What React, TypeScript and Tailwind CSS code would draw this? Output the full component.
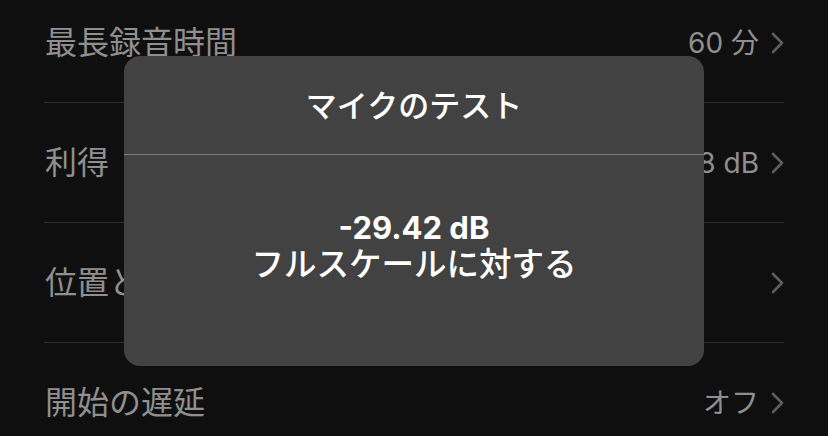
import React from 'react';

interface SettingRow {
    label: string;
    value?: string;
}

const rows: SettingRow[] = [
    { label: '最長録音時間', value: '60 分' },
    { label: '利得', value: '18 dB' },
    { label: '位置と品質' },
    { label: '開始の遅延', value: 'オフ' },
];

const Chevron: React.FC = () => (
    <svg width="14" height="24" viewBox="0 0 14 24" fill="none" className="shrink-0">
        <path d="M3 3l9 9-9 9" stroke="#5e5e5e" strokeWidth="2.6" strokeLinecap="round" strokeLinejoin="round" />
    </svg>
);

const App: React.FC = () => {
    return (
        <div
            className="relative w-[828px] h-[436px] overflow-hidden bg-[#0f0f0f]"
            style={{ fontFamily: 'Inter, "Noto Sans CJK JP", sans-serif' }}
        >
            {/* settings list */}
            <div className="mx-[44px] mt-[-17px] flex flex-col">
                {rows.map((row, i) => (
                    <div
                        key={i}
                        className="h-[120px] flex items-center justify-between border-b border-[#2e2e2e]"
                    >
                        <span className="text-[32px] leading-none text-[#8f8f8f] pl-px">{row.label}</span>
                        <div className="flex items-center gap-[11px]">
                            {row.value && (
                                <span className="text-[28px] leading-none text-[#8f8f8f]">{row.value}</span>
                            )}
                            <Chevron />
                        </div>
                    </div>
                ))}
            </div>

            {/* mic test modal */}
            <div className="absolute left-[124px] top-[56px] w-[580px] h-[310px] rounded-[16px] bg-[#424242] flex flex-col">
                <div className="h-[99px] flex items-center justify-center border-b border-[#7c7c7c]">
                    <span className="text-[31px] leading-none font-medium text-white pt-[1px]">マイクのテスト</span>
                </div>
                <div className="flex-1 flex flex-col items-center justify-center pb-[28px] text-white">
                    <span className="text-[31px] leading-[37px] font-bold">-29.42 dB</span>
                    <span className="text-[32.5px] leading-[38px] font-medium">フルスケールに対する</span>
                </div>
            </div>
        </div>
    );
};

export default App;
